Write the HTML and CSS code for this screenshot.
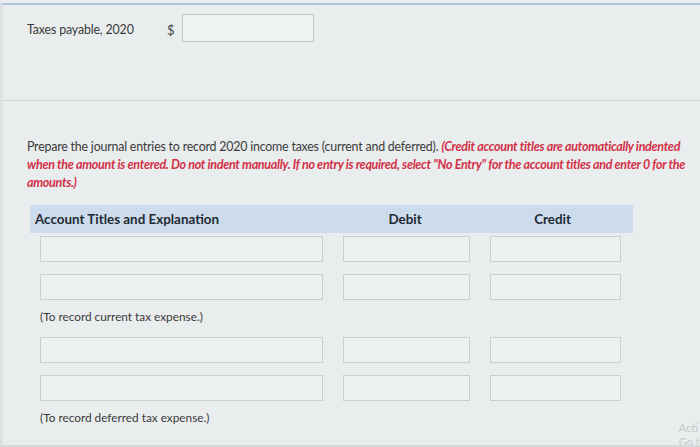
FILE: index.html
```html
<!DOCTYPE html>
<html>
<head>
<meta charset="utf-8">
<link rel="stylesheet" href="styles.css">
</head>
<body>
<div class="page">
  <div class="top">
    <span class="label">Taxes payable, 2020</span>
    <span class="dollar">$</span>
    <span class="input amount"></span>
  </div>
  <div class="main">
    <p class="instr">Prepare the journal entries to record 2020 income taxes (current and deferred). <em class="red">(Credit account titles are automatically indented when the amount is entered. Do not indent manually. If no entry is required, select "No Entry" for the account titles and enter 0 for the amounts.)</em></p>
    <div class="table">
      <div class="thead">
        <div class="th th-acct">Account Titles and Explanation</div>
        <div class="th th-debit">Debit</div>
        <div class="th th-credit">Credit</div>
      </div>
      <div class="row">
        <span class="input acct"></span><span class="input debit"></span><span class="input credit"></span>
      </div>
      <div class="row">
        <span class="input acct"></span><span class="input debit"></span><span class="input credit"></span>
      </div>
      <div class="note">(To record current tax expense.)</div>
      <div class="row">
        <span class="input acct"></span><span class="input debit"></span><span class="input credit"></span>
      </div>
      <div class="row">
        <span class="input acct"></span><span class="input debit"></span><span class="input credit"></span>
      </div>
      <div class="note">(To record deferred tax expense.)</div>
    </div>
    <div class="watermark"><span>Acti</span><span>Go to</span></div>
  </div>
</div>
</body>
</html>
```
FILE: styles.css
```css
html, body {
  margin: 0;
  padding: 0;
  background: #eaeeee;
}
body {
  width: 700px;
  height: 447px;
  overflow: hidden;
  font-family: Lato, "Open Sans", sans-serif;
  color: #333;
}
.page {
  height: 440px;
  border-top: 2px solid #b3c2df;
  margin-top: 3px;
  border-left: 3px solid #dde1e1;
  border-bottom: 2px solid #d5d9d9;
  background: #e9eded;
  overflow: hidden;
}
.top {
  height: 96px;
  display: flex;
  align-items: flex-start;
  padding: 9px 0 0 24px;
  box-sizing: border-box;
  border-bottom: 1px solid #cfd4d4;
}
.label {
  font-size: 12.4px;
  letter-spacing: -0.15px;
  color: #3a3a3a;
  margin-top: 8px;
  width: 140px;
}
.dollar {
  font-size: 13px;
  color: #444;
  margin-top: 8px;
  width: 15px;
}
.input {
  display: block;
  box-sizing: border-box;
  border: 1px solid #cacece;
  background: #edf0f0;
  height: 26px;
}
.amount {
  width: 132px;
  height: 28px;
  border-color: #bfc4c4;
  background: #eff2f2;
}
.main {
  position: relative;
  padding: 37px 2px 0 24px;
}
.instr {
  margin: 0;
  font-size: 12.4px;
  line-height: 18px;
  color: #3b3b3b;
  letter-spacing: -0.2px;
}
.red {
  color: #d33048;
  font-weight: 700;
  font-style: italic;
  font-size: 12.5px;
  letter-spacing: -0.3px;
}
.table {
  margin-top: 13px;
  margin-left: 3px;
}
.thead {
  display: flex;
  width: 603px;
  height: 28px;
  background: #cddced;
  align-items: center;
  font-weight: 700;
  font-size: 13.4px;
  color: #1f2a33;
}
.th-acct {
  width: 310px;
  padding-left: 5px;
  box-sizing: border-box;
}
.th-debit {
  width: 135px;
  text-align: center;
}
.th-credit {
  width: 162px;
  text-align: center;
}
.row {
  display: flex;
  gap: 20px;
  padding-left: 10px;
  margin-top: 12px;
}
.thead + .row {
  margin-top: 3px;
}
.acct {
  width: 283px;
}
.debit {
  width: 127px;
}
.credit {
  width: 131px;
}
.note {
  font-size: 11.8px;
  color: #3a3a3a;
  padding-left: 10px;
  margin-top: 9px;
  height: 17px;
}
.note + .row {
  margin-top: 11px;
}
.watermark {
  position: absolute;
  right: -6px;
  top: 320px;
  display: flex;
  flex-direction: column;
  font-size: 11px;
  color: #c5caca;
  line-height: 14px;
}
```
